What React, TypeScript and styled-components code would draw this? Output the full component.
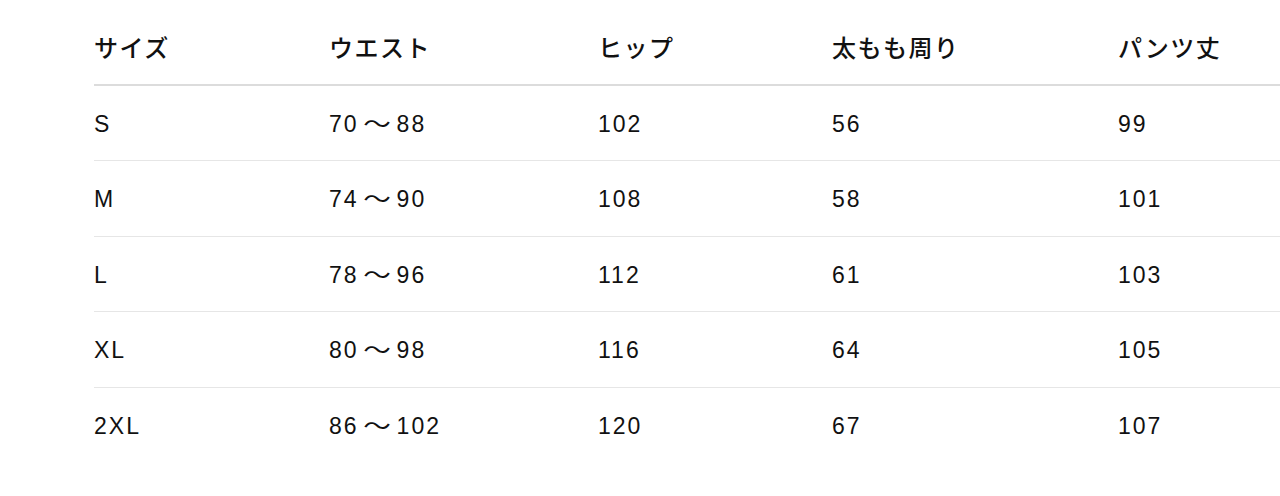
import styled, { createGlobalStyle } from "styled-components";

const GlobalStyle = createGlobalStyle`
  html, body {
    margin: 0;
    padding: 0;
    background: #ffffff;
    overflow: hidden;
  }
  body {
    font-family: "Liberation Sans", "Noto Sans CJK JP", sans-serif;
    color: #111111;
  }
`;

type SizeRow = {
  size: string;
  waist: [string, string];
  hip: string;
  thigh: string;
  length: string;
};

const headers = ["サイズ", "ウエスト", "ヒップ", "太もも周り", "パンツ丈"];

const rows: SizeRow[] = [
  { size: "S", waist: ["70", "88"], hip: "102", thigh: "56", length: "99" },
  { size: "M", waist: ["74", "90"], hip: "108", thigh: "58", length: "101" },
  { size: "L", waist: ["78", "96"], hip: "112", thigh: "61", length: "103" },
  { size: "XL", waist: ["80", "98"], hip: "116", thigh: "64", length: "105" },
  { size: "2XL", waist: ["86", "102"], hip: "120", thigh: "67", length: "107" },
];

const SizeChart = () => {
  return (
    <Page>
      <Table>
        <thead>
          <HeadRow>
            {headers.map((h) => (
              <HeadCell key={h}>{h}</HeadCell>
            ))}
          </HeadRow>
        </thead>
        <tbody>
          {rows.map((r, i) => (
            <BodyRow key={r.size} $last={i === rows.length - 1}>
              <Cell>{r.size}</Cell>
              <Cell>
                {r.waist[0]}
                <Tilde>〜</Tilde>
                {r.waist[1]}
              </Cell>
              <Cell>{r.hip}</Cell>
              <Cell>{r.thigh}</Cell>
              <Cell>{r.length}</Cell>
            </BodyRow>
          ))}
        </tbody>
      </Table>
    </Page>
  );
};

export default function App() {
  return (
    <>
      <GlobalStyle />
      <SizeChart />
    </>
  );
}

const Page = styled.div`
  width: 1280px;
  height: 496px;
  padding: 9px 0 0 94px;
  box-sizing: border-box;
`;

const Table = styled.table`
  width: 1250px;
  border-collapse: collapse;
  table-layout: fixed;

  th:nth-child(1),
  td:nth-child(1) {
    width: 235px;
  }
  th:nth-child(2),
  td:nth-child(2) {
    width: 269px;
  }
  th:nth-child(3),
  td:nth-child(3) {
    width: 234px;
  }
  th:nth-child(4),
  td:nth-child(4) {
    width: 286px;
  }
`;

const HeadRow = styled.tr`
  height: 76px;
  border-bottom: 2px solid #dcdcdc;
`;

const BodyRow = styled.tr<{ $last: boolean }>`
  height: 75.5px;
  border-bottom: ${(p) => (p.$last ? "none" : "1.5px solid #e6e6e6")};
`;

const HeadCell = styled.th`
  padding: 0;
  text-align: left;
  vertical-align: middle;
  font-family: "Noto Sans CJK JP", sans-serif;
  font-size: 24px;
  font-weight: 500;
  letter-spacing: 1.5px;
  color: #111111;
`;

const Cell = styled.td`
  padding: 2px 0 0;
  text-align: left;
  vertical-align: middle;
  font-size: 23px;
  line-height: 28px;
  font-weight: 400;
  letter-spacing: 2px;
  color: #111111;
`;

const Tilde = styled.span`
  display: inline-block;
  width: 36px;
  margin-right: 2px;
  text-align: center;
  letter-spacing: 0;
  line-height: 28px;
  vertical-align: top;
  transform: scaleX(1.2);
`;
